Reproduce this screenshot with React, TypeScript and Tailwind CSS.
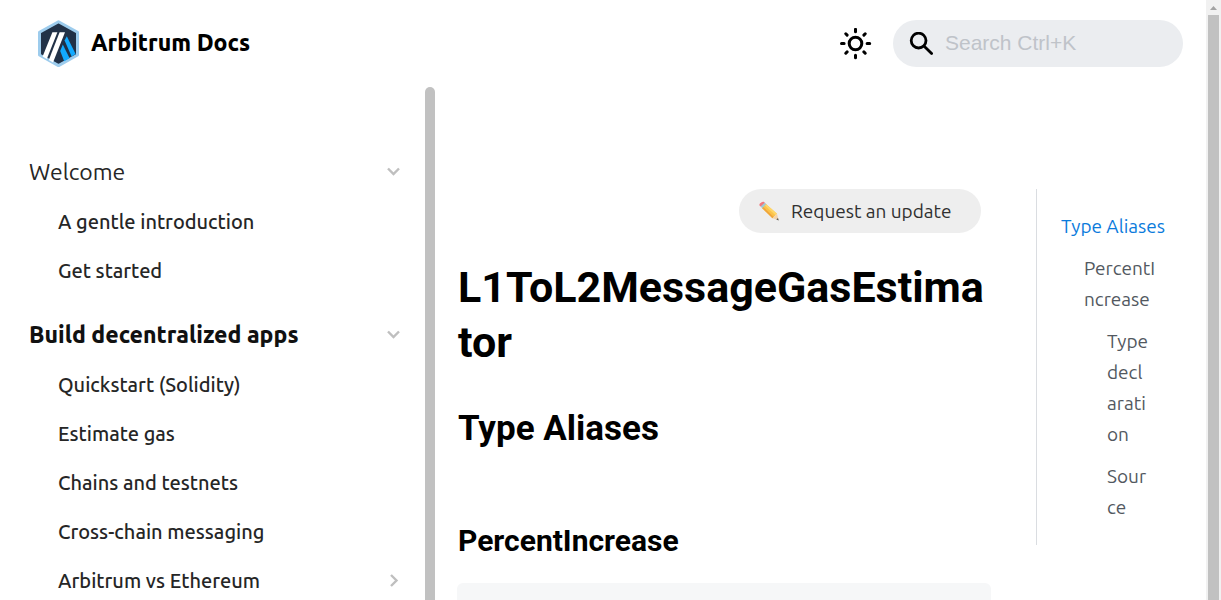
type NavItem = { label: string; expandable?: boolean };
type NavGroup = { label: string; active?: boolean; items: NavItem[] };

const groups: NavGroup[] = [
  { label: 'Welcome', items: [{ label: 'A gentle introduction' }, { label: 'Get started' }] },
  {
    label: 'Build decentralized apps',
    active: true,
    items: [
      { label: 'Quickstart (Solidity)' },
      { label: 'Estimate gas' },
      { label: 'Chains and testnets' },
      { label: 'Cross-chain messaging' },
      { label: 'Arbitrum vs Ethereum', expandable: true },
    ],
  },
];

function Chevron({ right = false }: { right?: boolean }) {
  return (
    <svg
      viewBox="0 0 16 16"
      className="h-4 w-4 shrink-0"
      fill="none"
      stroke="#bfbfbf"
      strokeWidth="2.4"
      aria-hidden="true"
    >
      <path d={right ? 'M6 2L11.5 7.5 6 13' : 'M3 4.5L8.5 10 14 4.5'} />
    </svg>
  );
}

function Logo() {
  return (
    <svg viewBox="0 0 42 48" className="h-12 w-[42px]" aria-hidden="true">
      <path d="M20.5 1.8L39.5 12.2v22.8L20.5 45.6 1.5 35V12.2z" fill="#213147" stroke="#9dcced" strokeWidth="3" strokeLinejoin="round" />
      <path d="M26.6 20.4L28.8 16.2 37.6 34 33.6 36.6z" fill="#12aaff" />
      <path d="M24.8 24.4L31.6 38.2 26.2 41.2 22.2 31z" fill="#12aaff" />
      <path d="M14.4 12.2h5L8.8 39 4.6 36.4z" fill="#fff" />
      <path d="M21.6 12.2H27L15 42.6 10.8 40z" fill="#fff" />
    </svg>
  );
}

function Sun() {
  return (
    <svg viewBox="0 0 32 32" className="h-8 w-8" fill="none" stroke="#000" strokeWidth="3" strokeLinecap="round" aria-hidden="true">
      <circle cx="15.5" cy="15.5" r="6.3" />
      <path d="M15.5 1.3v2.4M15.5 27.3v2.4M1.5 15.5h2.6M27.1 15.5h2.6M5.8 5.8l1.3 1.3M23.9 23.9l1.3 1.3M5.8 25.2l1.3-1.3M23.9 7.1l1.3-1.3" />
    </svg>
  );
}

function Header() {
  return (
    <header className="flex h-[87px] shrink-0 items-center pl-[38px] pr-[23px]">
      <a href="#home" className="flex items-center gap-[11px] text-[23px] font-extrabold text-black">
        <Logo />
        Arbitrum Docs
      </a>
      <button type="button" aria-label="Toggle theme" className="ml-auto mr-[21px]">
        <Sun />
      </button>
      <label className="flex h-[47px] w-[290px] items-center gap-3 rounded-full bg-[#ebedf0] pl-4 pr-4">
        <svg viewBox="0 0 24 24" className="h-6 w-6 shrink-0" fill="none" stroke="#000" strokeWidth="2.8" strokeLinecap="round" aria-hidden="true">
          <circle cx="9.6" cy="8.6" r="7.4" />
          <path d="M15.2 14.2l7.4 7.4" />
        </svg>
        <input
          type="search"
          aria-label="Search"
          placeholder="Search Ctrl+K"
          className="w-full min-w-0 bg-transparent pb-[2px] font-['Liberation_Sans',sans-serif] text-[21px] leading-6 text-black outline-none placeholder:text-[#bfc3c9]"
        />
      </label>
    </header>
  );
}

function Sidebar() {
  return (
    <aside className="flex w-[435px] shrink-0 overflow-hidden">
      <nav aria-label="Docs" className="flex-1 pl-[29px] pr-6 pt-[60px] text-[#262626]">
        <ul className="flex flex-col gap-[15px]">
          {groups.map((g) => (
            <li key={g.label}>
              <button
                type="button"
                className={
                  g.active
                    ? 'flex h-[50px] w-full items-center justify-between text-[23px] font-extrabold text-[#111]'
                    : 'flex h-[50px] w-full items-center justify-between text-[23px]'
                }
              >
                {g.label}
                <Chevron />
              </button>
              <ul className="pl-[29px] text-[20px] font-medium">
                {g.items.map((i) => (
                  <li key={i.label}>
                    <a href="#doc" className="flex h-[49px] items-center justify-between">
                      {i.label}
                      {i.expandable && <Chevron right />}
                    </a>
                  </li>
                ))}
              </ul>
            </li>
          ))}
        </ul>
      </nav>
      <div className="w-[10px] shrink-0 rounded-t-full bg-[#c1c1c1]" />
    </aside>
  );
}

function Article() {
  return (
    <article className="min-w-0 flex-1">
      <div className="flex justify-end pr-[10px]">
        <a href="#update" className="flex h-11 w-[242px] items-center gap-3 rounded-full bg-[#eee] pl-5 text-[19px] text-[#303030]">
          <svg viewBox="0 0 20 20" className="h-5 w-5 shrink-0" aria-hidden="true">
            <path d="M1.2 2.2Q3 .2 4.8.8L6.6 2.5 2.4 6.3.5 4.6Q0 3.4 1.2 2.2z" fill="#f2777d" />
            <path d="M5.6 1.7L7.8 3.8 3.8 7.8 1.6 5.5z" fill="#9fc9d6" />
            <path d="M7.2 3.2L18 12.8 13.5 17.2 3.2 7.2z" fill="#fbc34a" />
            <path d="M7.2 3.2L18 12.8 16.6 14.2 5.8 4.6z" fill="#ffd668" />
            <path d="M4.4 6.1L3.2 7.2 13.5 17.2 14.8 15.9z" fill="#f0a63c" />
            <path d="M18 12.8L19.6 19.2 13.5 17.2z" fill="#f3d3ab" />
            <path d="M19 16.9L19.7 19.4 17.3 18.6z" fill="#555" />
          </svg>
          Request an update
        </a>
      </div>
      <div className="pl-px font-['Roboto',sans-serif] font-bold text-black">
        <h1 className="mt-[27px] break-words text-[43px] leading-[55px]">L1ToL2MessageGasEstimator</h1>
        <h2 className="mt-[37px] text-[35px] leading-[44px]">Type Aliases</h2>
        <h3 className="mt-[71px] text-[30px] leading-[38px]">PercentIncrease</h3>
      </div>
      <div className="mt-[23px] h-24 rounded-md bg-[#f6f7f8]" />
    </article>
  );
}

function Toc() {
  return (
    <nav
      aria-label="On this page"
      className="w-[147px] shrink-0 self-start border-l border-[#dadde1] py-[22px] pl-6 text-[19px] leading-[31px] text-[#525860]"
    >
      <ul className="flex flex-col gap-[11px]">
        <li>
          <a href="#type-aliases" className="block whitespace-nowrap text-[#0b7bdc]">Type Aliases</a>
        </li>
        <li className="pl-[23px]">
          <a href="#percentincrease" className="block">PercentI<br />ncrease</a>
        </li>
        <li className="pl-[46px]">
          <a href="#type-declaration" className="block">Type<br />decl<br />arati<br />on</a>
        </li>
        <li className="pl-[46px]">
          <a href="#source" className="block">Sour<br />ce</a>
        </li>
      </ul>
    </nav>
  );
}

export default function App() {
  return (
    <div className="flex h-screen overflow-hidden bg-white font-['Ubuntu','Noto_Sans',sans-serif]">
      <div className="flex min-w-0 flex-1 flex-col">
        <Header />
        <div className="flex min-h-0 flex-1">
          <Sidebar />
          <main className="flex min-w-0 flex-1 gap-[45px] overflow-hidden pl-[22px] pr-[23px] pt-[102px]">
            <Article />
            <Toc />
          </main>
        </div>
      </div>
      <div className="flex w-[15px] shrink-0 flex-col bg-[#f1f1f1] px-[2px]" aria-hidden="true">
        <svg viewBox="0 0 11 15" className="h-[15px] w-[11px]">
          <path d="M5.5 6L9 10H2z" fill="#a3a3a3" />
        </svg>
        <div className="flex-1 bg-[#c1c1c1]" />
      </div>
    </div>
  );
}
